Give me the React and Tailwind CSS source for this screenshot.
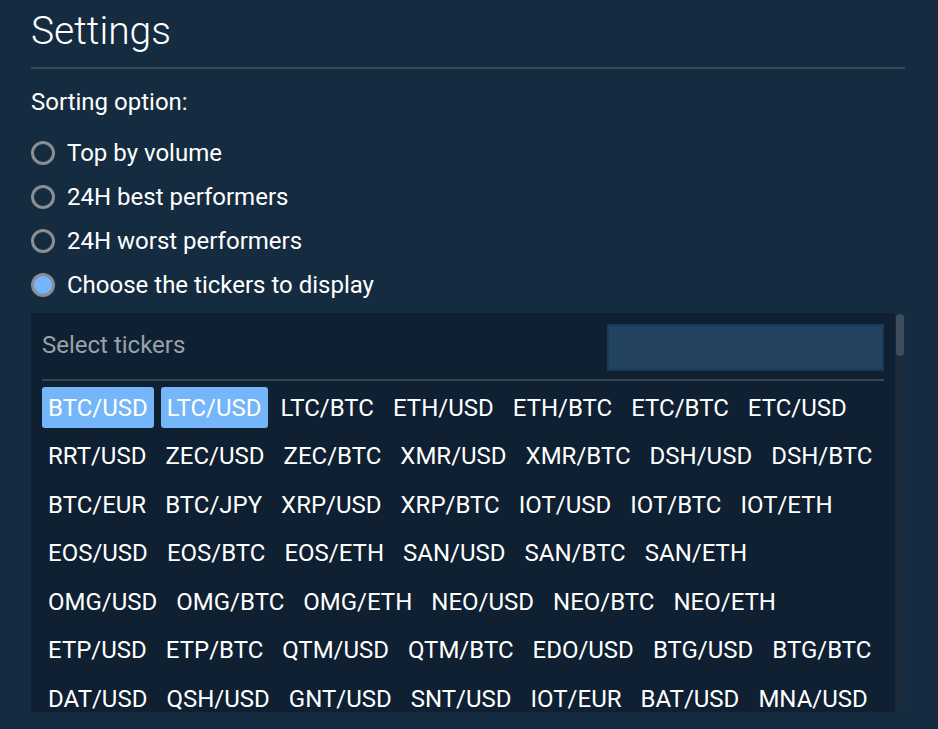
import { useState } from "react";

const SORT_OPTIONS = [
  "Top by volume",
  "24H best performers",
  "24H worst performers",
  "Choose the tickers to display",
];

// grouped the way the list lays out in the panel
const TICKER_ROWS = [
  ["BTC/USD", "LTC/USD", "LTC/BTC", "ETH/USD", "ETH/BTC", "ETC/BTC", "ETC/USD"],
  ["RRT/USD", "ZEC/USD", "ZEC/BTC", "XMR/USD", "XMR/BTC", "DSH/USD", "DSH/BTC"],
  ["BTC/EUR", "BTC/JPY", "XRP/USD", "XRP/BTC", "IOT/USD", "IOT/BTC", "IOT/ETH"],
  ["EOS/USD", "EOS/BTC", "EOS/ETH", "SAN/USD", "SAN/BTC", "SAN/ETH"],
  ["OMG/USD", "OMG/BTC", "OMG/ETH", "NEO/USD", "NEO/BTC", "NEO/ETH"],
  ["ETP/USD", "ETP/BTC", "QTM/USD", "QTM/BTC", "EDO/USD", "BTG/USD", "BTG/BTC"],
  ["DAT/USD", "QSH/USD", "GNT/USD", "SNT/USD", "IOT/EUR", "BAT/USD", "MNA/USD"],
];

export default function App() {
  const [sort, setSort] = useState(3);
  const [selected, setSelected] = useState(["BTC/USD", "LTC/USD"]);

  function toggle(ticker) {
    setSelected((prev) =>
      prev.includes(ticker) ? prev.filter((t) => t !== ticker) : [...prev, ticker]
    );
  }

  return (
    <div className="h-[729px] overflow-hidden bg-[#142b40] px-[31px] pt-[7px] font-['Roboto',sans-serif] text-white">
      <h1 className="text-[39px] font-light leading-[48px]">Settings</h1>
      <div className="mt-[12px] h-[2px] w-[874px] bg-[#36485a]" />

      <p className="mt-[19px] text-[24px] leading-[28px]">Sorting option:</p>

      <div className="mt-[15px]">
        {SORT_OPTIONS.map((label, i) => (
          <label key={label} className="flex h-[44px] cursor-pointer items-center gap-[12px]">
            <span
              className={`h-[24px] w-[24px] rounded-full border-[3px] border-[#8a8e92] ${
                sort === i ? "bg-[#75b5ff]" : ""
              }`}
            />
            <input
              type="radio"
              name="sort"
              className="hidden"
              checked={sort === i}
              onChange={() => setSort(i)}
            />
            <span className="text-[24px] leading-[28px]">{label}</span>
          </label>
        ))}
      </div>

      <div className="mt-[6px] flex h-[399px] w-[874px]">
        <div className="w-[864px] overflow-hidden bg-[#0e2031] px-[11px] pt-[11px]">
          <div className="flex items-center justify-between border-b-2 border-[#3a4651] pb-[8px]">
            <span className="pb-[5px] text-[24px] text-[#9aa1a8]">Select tickers</span>
            <input
              type="text"
              className="h-[47px] w-[277px] border-2 border-[#173a5c] bg-[#234360] px-2 text-[22px] text-white outline-none"
            />
          </div>
          <div className="flex flex-col gap-[7.6px] pt-[6px]">
            {TICKER_ROWS.map((row, r) => (
              <div key={r} className="flex gap-[7px]">
                {row.map((ticker) => (
                  <button
                    key={ticker}
                    type="button"
                    onClick={() => toggle(ticker)}
                    className={`flex h-[41px] items-center rounded-[3px] px-[6px] text-[24px] ${
                      selected.includes(ticker) ? "bg-[#75b5fa]" : ""
                    }`}
                  >
                    {ticker}
                  </button>
                ))}
              </div>
            ))}
          </div>
        </div>
        <div className="w-[10px] bg-[#1b2b3a] pt-[1px]">
          <div className="mx-auto h-[42px] w-[8px] rounded-full bg-[#3e4e5c]" />
        </div>
      </div>
    </div>
  );
}
